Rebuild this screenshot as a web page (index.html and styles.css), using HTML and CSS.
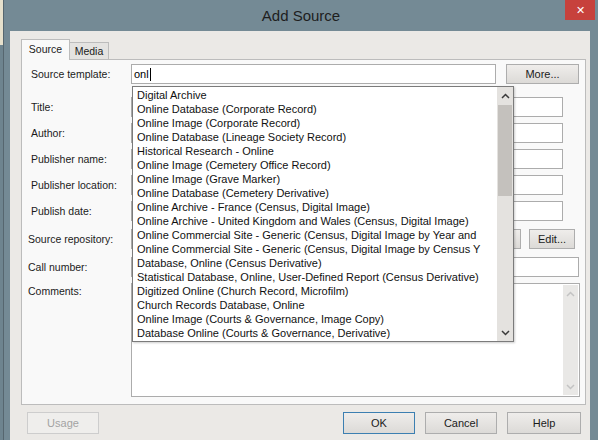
FILE: index.html
```html
<!DOCTYPE html>
<html lang="en">
<head>
    <meta charset="UTF-8">
    <title>Add Source</title>
    <link rel="stylesheet" href="styles.css">
</head>
<body>
<div class="screen">
    <div class="desk"></div>
    <div class="window">
        <div class="titlebar">
            <span class="title">Add Source</span>
            <span class="close">&#x2715;</span>
        </div>
        <div class="frame">
            <div class="client">
                <div class="tabs">
                    <span class="tab active">Source</span>
                    <span class="tab">Media</span>
                </div>
                <div class="panel">
                    <div class="row row-template">
                        <span class="lbl">Source template:</span>
                        <div class="field typed">onl<span class="caret"></span></div>
                        <button class="btn more">More...</button>
                    </div>
                    <div class="row row-text first">
                        <span class="lbl">Title:</span>
                        <div class="field"></div>
                    </div>
                    <div class="row row-text">
                        <span class="lbl">Author:</span>
                        <div class="field"></div>
                    </div>
                    <div class="row row-text">
                        <span class="lbl">Publisher name:</span>
                        <div class="field"></div>
                    </div>
                    <div class="row row-text">
                        <span class="lbl">Publisher location:</span>
                        <div class="field"></div>
                    </div>
                    <div class="row row-text">
                        <span class="lbl">Publish date:</span>
                        <div class="field"></div>
                    </div>
                    <div class="row row-repo">
                        <span class="lbl tight">Source repository:</span>
                        <div class="field"></div>
                        <button class="btn pick" aria-label="Select repository"></button>
                        <button class="btn edit">Edit...</button>
                    </div>
                    <div class="row row-call">
                        <span class="lbl tight">Call number:</span>
                        <div class="field"></div>
                    </div>
                    <div class="row row-comments">
                        <span class="lbl tight">Comments:</span>
                        <div class="memo">
                            <div class="vscroll off">
                                <span class="arrow"><svg width="9" height="6" viewBox="0 0 9 6"><polyline points="1,5 4.5,1.5 8,5"/></svg></span>
                                <span class="arrow"><svg width="9" height="6" viewBox="0 0 9 6"><polyline points="1,1 4.5,4.5 8,1"/></svg></span>
                            </div>
                        </div>
                    </div>

                    <!-- autocomplete list for the template box -->
                    <div class="dropdown">
                        <ul class="options">
                            <li>Digital Archive</li>
                            <li>Online Database (Corporate Record)</li>
                            <li>Online Image (Corporate Record)</li>
                            <li>Online Database (Lineage Society Record)</li>
                            <li>Historical Research - Online</li>
                            <li>Online Image (Cemetery Office Record)</li>
                            <li>Online Image (Grave Marker)</li>
                            <li>Online Database (Cemetery Derivative)</li>
                            <li>Online Archive - France (Census, Digital Image)</li>
                            <li>Online Archive - United Kingdom and Wales (Census, Digital Image)</li>
                            <li>Online Commercial Site - Generic (Census, Digital Image by Year and</li>
                            <li>Online Commercial Site - Generic (Census, Digital Image by Census Y</li>
                            <li>Database, Online (Census Derivative)</li>
                            <li>Statistical Database, Online, User-Defined Report (Census Derivative)</li>
                            <li>Digitized Online (Church Record, Microfilm)</li>
                            <li>Church Records Database, Online</li>
                            <li>Online Image (Courts &amp; Governance, Image Copy)</li>
                            <li>Database Online (Courts &amp; Governance, Derivative)</li>
                        </ul>
                        <div class="vscroll">
                            <span class="arrow"><svg width="9" height="6" viewBox="0 0 9 6"><polyline points="1,5 4.5,1.5 8,5"/></svg></span>
                            <span class="thumb"></span>
                            <span class="arrow"><svg width="9" height="6" viewBox="0 0 9 6"><polyline points="1,1 4.5,4.5 8,1"/></svg></span>
                        </div>
                    </div>
                </div>
                <div class="actions">
                    <button class="btn big" disabled>Usage</button>
                    <button class="btn big ok">OK</button>
                    <button class="btn big">Cancel</button>
                    <button class="btn big help">Help</button>
                </div>
            </div>
        </div>
    </div>
</div>
</body>
</html>
```

FILE: styles.css
```css
body {
    margin: 0;
    font-family: 'Liberation Sans', Arial, sans-serif;
    font-size: 11px;
    color: #1b1b1b;
    background: #748a95;
}
.screen {
    display: flex;
    width: 598px;
    height: 440px;
    overflow: hidden;
}
.desk {
    width: 3px;
    flex: none;
    background: linear-gradient(#e6e0cc 0 45px, #6e848f 45px);
}
.window {
    flex: 1;
    display: flex;
    flex-direction: column;
    background: #748a95;
    border-left: 1px solid #56666f;
    min-width: 0;
}
.titlebar {
    height: 31px;
    flex: none;
    display: grid;
    grid-template-columns: 1fr auto 1fr;
    align-items: center;
}
.title {
    grid-column: 2;
    font-size: 15px;
    color: #1e1e1e;
}
.close {
    grid-column: 3;
    justify-self: end;
    align-self: start;
    width: 30px;
    height: 20px;
    margin-right: 3px;
    background: #c7413c;
    color: #fff;
    font-size: 11px;
    display: flex;
    align-items: center;
    justify-content: center;
}
.frame {
    flex: 1;
    min-height: 0;
    padding: 0 8px 0 6px;
}
.client {
    height: 100%;
    box-sizing: border-box;
    background: #ebe9e6;
    padding: 8px 4px 0 11px;
}

/* tabs */
.tabs {
    display: flex;
    align-items: flex-end;
    height: 20px;
}
.tab {
    box-sizing: border-box;
    width: 39px;
    height: 17px;
    border: 1px solid #bcbcbc;
    border-bottom: none;
    border-left: none;
    background: #e4e3e1;
    font-size: 10.5px;
    display: flex;
    align-items: center;
    justify-content: center;
}
.tab.active {
    width: 49px;
    height: 21px;
    margin-bottom: -1px;
    border-left: 1px solid #bcbcbc;
    background: #f9f9f9;
    position: relative;
    z-index: 1;
    padding-bottom: 2px;
}
.panel {
    position: relative;
    box-sizing: border-box;
    width: 565px;
    border: 1px solid #bcbcbc;
    background: #f9f9f9;
    padding: 4px 0 7px 9px;
}

/* form rows */
.row {
    display: flex;
    align-items: center;
}
.lbl {
    width: 100px;
    flex: none;
    font-size: 10.5px;
    white-space: nowrap;
}
.lbl.tight {
    width: 103px;
    margin-left: -3px;
}
.field {
    flex: 1;
    height: 20px;
    box-sizing: border-box;
    border: 1px solid #acacac;
    background: #fff;
}
.typed {
    display: flex;
    align-items: center;
    padding-left: 2px;
    font-size: 11px;
    color: #000;
}
.caret {
    width: 1px;
    height: 13px;
    background: #000;
    margin-left: 1px;
}
.btn {
    height: 20px;
    box-sizing: border-box;
    border: 1px solid #adadad;
    background: linear-gradient(#efedeb, #dcdad7);
    font-family: inherit;
    font-size: 11px;
    color: #1b1b1b;
    padding: 0;
}
.row-template { margin-right: 6px; }
.more { width: 73px; margin-left: 10px; margin-top: -1px; }
.row-text { margin-top: 6px; margin-right: 22px; }
.row-text.first { margin-top: 13px; }
.row-repo { margin-top: 8px; margin-right: 10px; }
.pick { width: 72px; margin-left: 8px; }
.edit { width: 46px; margin-left: 8px; }
.row-call { margin-top: 8px; margin-right: 6px; }
.row-comments { margin-top: 6px; margin-right: 5px; align-items: flex-start; }
.row-comments .lbl { padding-top: 2px; }
.memo {
    flex: 1;
    height: 114px;
    box-sizing: border-box;
    border: 1px solid #acacac;
    background: #fff;
    padding: 1px;
    display: flex;
    justify-content: flex-end;
}

/* scrollbars */
.vscroll {
    width: 16px;
    flex: none;
    display: flex;
    flex-direction: column;
    justify-content: space-between;
    background: #e4e2df;
}
.arrow {
    height: 17px;
    display: flex;
    align-items: center;
    justify-content: center;
}
.arrow polyline {
    fill: none;
    stroke: #3a3a3a;
    stroke-width: 1.5;
}
.vscroll.off {
    width: 15px;
    background: #e9e8e6;
}
.vscroll.off polyline { stroke: #c3c3c3; }
.thumb {
    height: 91px;
    margin: 1px 1px 0;
    background: #c4c1bd;
}
.vscroll .thumb + .arrow { margin-top: auto; }

/* autocomplete dropdown */
.dropdown {
    position: absolute;
    left: 110px;
    top: 26px;
    width: 382px;
    height: 256px;
    box-sizing: border-box;
    border: 1px solid #7b7b7b;
    background: #fff;
    display: flex;
    box-shadow: 1px 1px 2px rgba(0, 0, 0, 0.2);
    z-index: 2;
}
.options {
    flex: 1;
    min-width: 0;
    list-style: none;
    margin: 0;
    padding: 1px 6px 0 4px;
    font-size: 11px;
    line-height: 14px;
    color: #111;
}
.options li {
    white-space: nowrap;
    overflow: hidden;
}

/* bottom buttons */
.actions {
    display: flex;
    gap: 10px;
    margin-top: 7px;
    padding: 0 5px 0 6px;
}
.big {
    width: 72px;
    height: 22px;
}
.big:disabled {
    color: #a3a3a3;
    border-color: #cdcdcd;
    background: #efeeec;
    margin-right: auto;
}
.ok { border-color: #3c7fb1; }
.help { width: 74px; }
```
